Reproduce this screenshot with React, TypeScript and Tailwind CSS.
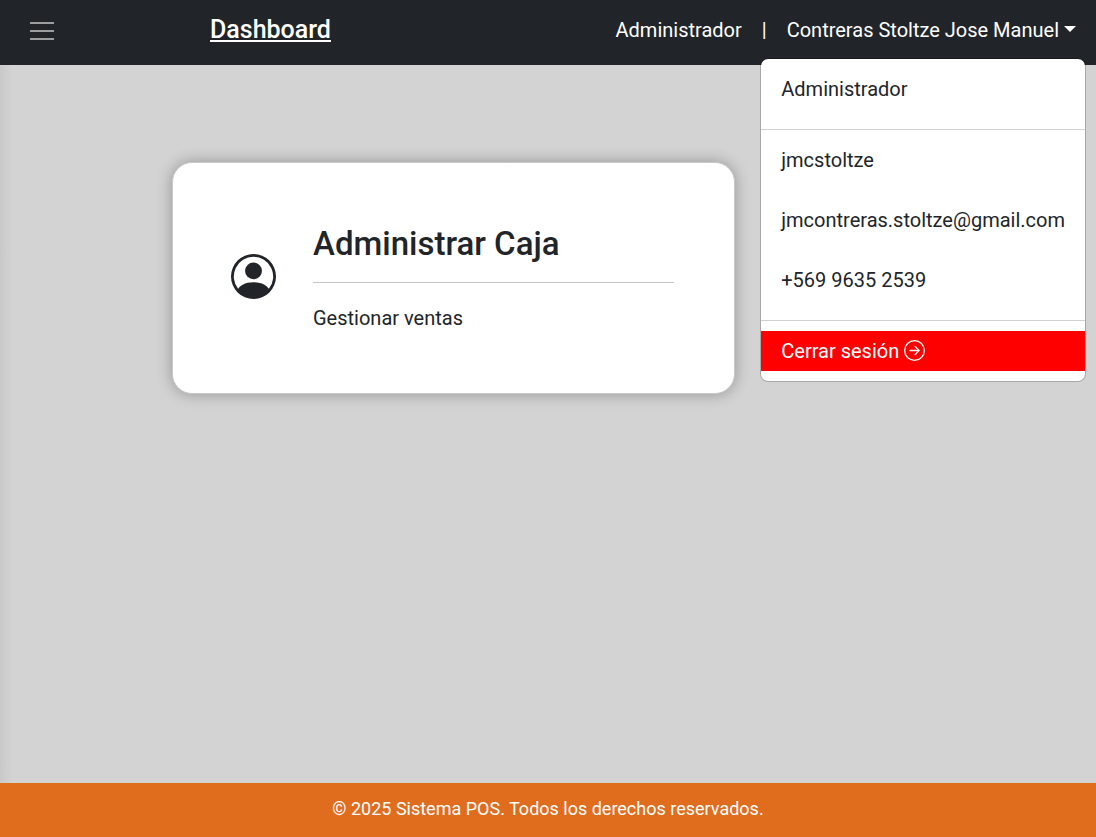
import { useState } from 'react';
import { BsArrowRightCircle, BsPersonCircle } from 'react-icons/bs';

const contactLines = ['jmcstoltze', 'jmcontreras.stoltze@gmail.com', '+569 9635 2539'];

function UserMenu() {
  return (
    <div className="absolute top-full right-[-10px] z-10 -mt-0.5 flex flex-col rounded-lg border border-black/20 bg-white bg-clip-padding py-2.5 text-[#212529]">
      <p className="mb-5 px-5 py-[5px]">Administrador</p>
      <hr className="mb-2.5 border-[#d0d1d2]" />
      {contactLines.map((line) => (
        <p key={line} className="mb-5 px-5 py-[5px] whitespace-nowrap">
          {line}
        </p>
      ))}
      <hr className="mb-2.5 border-[#d0d1d2]" />
      <a href="#salir" className="flex items-center gap-[5px] bg-[#ff0000] px-5 py-[5px] text-white">
        Cerrar sesión
        <BsArrowRightCircle className="mb-0.5 size-[21px]" />
      </a>
    </div>
  );
}

function Header({ open, onToggle }: { open: boolean; onToggle: () => void }) {
  return (
    <header className="flex h-[65px] items-start bg-[#212529] pr-5 pl-[30px] text-white">
      <button type="button" aria-label="Abrir menú" className="mt-[22px] mr-[156px] flex w-6 shrink-0 flex-col gap-1.5">
        <span className="h-0.5 w-full bg-white/55" />
        <span className="h-0.5 w-full bg-white/55" />
        <span className="h-0.5 w-full bg-white/55" />
      </button>
      <a href="#dashboard" className="mt-3 text-[25px] leading-9 font-medium underline">
        Dashboard
      </a>
      <nav className="relative ml-auto flex h-[60px] items-center gap-5 whitespace-nowrap">
        <span>Administrador</span>
        <span>|</span>
        <button type="button" aria-expanded={open} onClick={onToggle} className="flex items-center gap-[5px]">
          Contreras Stoltze Jose Manuel
          <svg viewBox="0 0 12 6" className="mb-0.5 h-1.5 w-3 fill-current" aria-hidden="true">
            <path d="M0 0h12L6 6z" />
          </svg>
        </button>
        {open && <UserMenu />}
      </nav>
    </header>
  );
}

function CashCard() {
  return (
    <article className="flex w-full max-w-[563px] items-center gap-[37px] rounded-[20px] border border-[#c9c9c9] bg-white py-[60px] pr-[60px] pl-[58px] shadow-[0_0_15px_rgba(0,0,0,0.3)]">
      <BsPersonCircle className="mb-1 size-[45px] shrink-0" />
      <div className="grow">
        <h2 className="mb-[17px] text-[33px] leading-[42px] font-medium">Administrar Caja</h2>
        <hr className="mb-5 border-[#c4c5c6]" />
        <p>Gestionar ventas</p>
      </div>
    </article>
  );
}

export default function App() {
  const [open, setOpen] = useState(true);
  return (
    <div className="flex min-h-screen flex-col bg-[#d3d3d3] font-['Roboto',sans-serif] text-[20px] leading-[30px] text-[#212529]">
      <Header open={open} onToggle={() => setOpen(!open)} />
      <main className="grow bg-linear-to-r from-[#c9c9c9] to-[#d3d3d3] to-[12px] px-[172px] pt-[97px] pb-10">
        <CashCard />
      </main>
      <footer className="bg-[#e06c1e] pt-[11px] pb-[13px] text-center text-[18px] text-white">
        © 2025 Sistema POS. Todos los derechos reservados.
      </footer>
    </div>
  );
}
